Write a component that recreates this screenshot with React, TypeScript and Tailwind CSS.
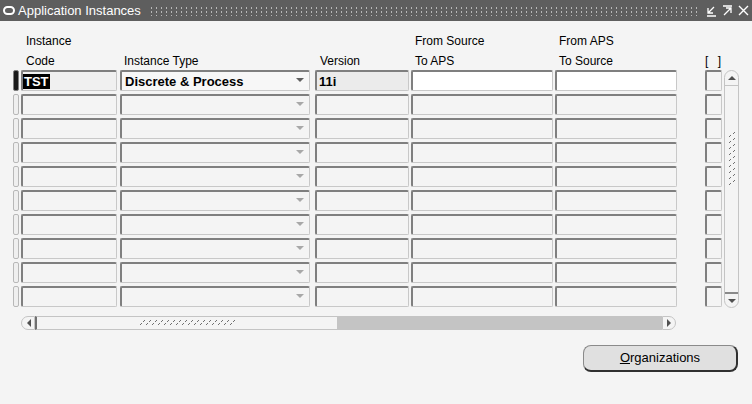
import React from "react";

const FONT = { fontFamily: '"Liberation Sans", Arial, sans-serif' };

const ROWS = 10;

function Cell({ w, bg = "bg-[#f4f4f4]", children, combo = false, active = false }: { w: string; bg?: string; children?: React.ReactNode; combo?: boolean; active?: boolean }) {
  return (
    <div
      className={`relative ${w} h-[21px] ${bg} rounded-[2px] border-t-2 border-l-2 border-r border-b border-t-[#7f7f7f] border-l-[#7f7f7f] border-r-[#c8c8c8] border-b-[#c8c8c8] flex items-center pl-[1px] text-[13px] font-bold text-black leading-none`}
    >
      {children}
      {combo && (
        <span className={`absolute right-[5px] top-[6px] w-0 h-0 border-l-[4px] border-r-[4px] border-t-[4px] border-l-transparent border-r-transparent ${active ? "border-t-[#606060]" : "border-t-[#a8a8a8]"}`} />
      )}
    </div>
  );
}

function Row({ i }: { i: number }) {
  const first = i === 0;
  return (
    <div className="flex items-start h-[24px]">
      <div className="w-[13px]" />
      <div className={`w-[6px] h-[21px] rounded-[2px] ${first ? "bg-[#1a1a1a] border border-[#7f7f7f]" : "border border-[#b8b8b8] bg-[#efefef]"}`} />
      <div className="w-[2px]" />
      <Cell w="w-[96px]" bg={first ? "bg-[#f0f0f0]" : "bg-[#f4f4f4]"}>
        {first && <span className="bg-black text-white px-[1px] py-[1px] -ml-[1px]">TST</span>}
      </Cell>
      <div className="w-[3px]" />
      <Cell w="w-[190px]" bg={first ? "bg-[#f7f7f7]" : "bg-[#f4f4f4]"} combo active={first}>
        {first && <span className="pl-[2px]">Discrete &amp; Process</span>}
      </Cell>
      <div className="w-[5px]" />
      <Cell w="w-[94px]" bg={first ? "bg-[#ebebeb]" : "bg-[#f4f4f4]"}>
        {first && <span className="pl-[1px]">11i</span>}
      </Cell>
      <div className="w-[2px]" />
      <Cell w="w-[142px]" bg={first ? "bg-white" : "bg-[#f4f4f4]"} />
      <div className="w-[2px]" />
      <Cell w="w-[122px]" bg={first ? "bg-white" : "bg-[#f4f4f4]"} />
      <div className="w-[28px]" />
      <div className="w-[17px] h-[21px] rounded-[2px] border-t-2 border-l-2 border-r border-b border-t-[#7f7f7f] border-l-[#7f7f7f] border-r-[#c8c8c8] border-b-[#c8c8c8] bg-[#f4f4f4]" />
    </div>
  );
}

function Grip({ n, vertical = false }: { n: number; vertical?: boolean }) {
  return (
    <svg width={vertical ? 8 : n * 6} height={vertical ? n * 6 : 6}>
      {Array.from({ length: n }).map((_, k) =>
        vertical ? (
          <g key={k}>
            <rect x={1} y={k * 6 + 4} width={1} height={1} fill="#707070" />
            <rect x={2} y={k * 6 + 3} width={1} height={1} fill="#707070" />
            <rect x={5} y={k * 6 + 1} width={1} height={1} fill="#707070" />
            <rect x={6} y={k * 6} width={1} height={1} fill="#707070" />
          </g>
        ) : (
          <g key={k}>
            <rect x={k * 6 + 1} y={4} width={1} height={1} fill="#707070" />
            <rect x={k * 6 + 2} y={3} width={1} height={1} fill="#707070" />
            <rect x={k * 6 + 4} y={1} width={1} height={1} fill="#707070" />
            <rect x={k * 6 + 5} y={0} width={1} height={1} fill="#707070" />
          </g>
        )
      )}
    </svg>
  );
}

export default function App() {
  return (
    <div className="w-[752px] h-[404px] bg-[#f4f4f4] overflow-hidden" style={FONT}>
      {/* title bar */}
      <div className="h-[21px] bg-[#5e5e5e] flex items-center text-white">
        <div className="ml-[3px] w-[12px] h-[9px] rounded-full border-2 border-white" />
        <span className="ml-[3px] text-[13px] leading-none">Application Instances</span>
        <div className="flex-1 mx-[8px] h-[10px] bg-[radial-gradient(#b8b8b8_0.7px,transparent_0.9px)] bg-[length:5px_4px]" />
        <div className="flex items-center gap-[3px] mr-[2px]">
          <svg width="13" height="13" viewBox="0 0 13 13">
            <path d="M9 3 L3 9 M3 4 V9 H8 M2 12 H11" stroke="white" strokeWidth="1.3" fill="none" />
          </svg>
          <svg width="13" height="13" viewBox="0 0 13 13">
            <path d="M2 2 H11 M3 11 L10 4 M5 4 H10 V9" stroke="white" strokeWidth="1.3" fill="none" />
          </svg>
          <svg width="13" height="13" viewBox="0 0 13 13">
            <path d="M2 2 L11 11 M11 2 L2 11" stroke="white" strokeWidth="1.4" fill="none" />
          </svg>
        </div>
      </div>

      {/* column headings */}
      <div className="h-[49px] text-[12px] text-black leading-[20px]">
        <div className="flex pt-[10px]">
          <div className="w-[26px]" />
          <div className="w-[389px]">Instance</div>
          <div className="w-[144px]">From Source</div>
          <div>From APS</div>
        </div>
        <div className="flex">
          <div className="w-[26px]" />
          <div className="w-[98px]">Code</div>
          <div className="w-[196px]">Instance Type</div>
          <div className="w-[95px]">Version</div>
          <div className="w-[144px]">To APS</div>
          <div className="w-[146px]">To Source</div>
          <div className="tracking-[3px]">[ ]</div>
        </div>
      </div>

      {/* rows + vertical scrollbar */}
      <div className="flex">
        <div className="flex flex-col">
          {Array.from({ length: ROWS }).map((_, i) => (
            <Row key={i} i={i} />
          ))}
        </div>
        <div className="ml-[2px] w-[15px] h-[238px] rounded-full border border-[#c4c4c4] bg-[#f4f4f4] flex flex-col items-center justify-between">
          <div className="w-full h-[15px] border-b border-[#c4c4c4] flex items-center justify-center rounded-t-full">
            <span className="w-0 h-0 border-l-[4px] border-r-[4px] border-b-[4px] border-l-transparent border-r-transparent border-b-[#505050]" />
          </div>
          <div className="mt-[46px]">
            <Grip n={9} vertical />
          </div>
          <div className="flex-1" />
          <div className="w-full h-[15px] border-t-2 border-[#8a8a8a] flex items-center justify-center rounded-b-full">
            <span className="w-0 h-0 border-l-[4px] border-r-[4px] border-t-[4px] border-l-transparent border-r-transparent border-t-[#505050]" />
          </div>
        </div>
      </div>

      {/* horizontal scrollbar */}
      <div className="flex mt-[6px] ml-[21px] w-[655px] h-[14px]">
        <div className="w-[14px] h-[14px] bg-[#f4f4f4] border border-[#c4c4c4] rounded-l-full flex items-center justify-center">
          <span className="w-0 h-0 border-t-[4px] border-b-[4px] border-r-[4px] border-t-transparent border-b-transparent border-r-[#505050] ml-[2px]" />
        </div>
        <div className="w-[303px] h-[14px] bg-[#f4f4f4] border-t border-b border-l-2 border-r border-[#c4c4c4] border-l-[#707070] flex items-center justify-center">
          <Grip n={16} />
        </div>
        <div className="flex-1 bg-[#c4c4c4]" />
        <div className="w-[14px] h-[14px] bg-[#f4f4f4] border border-[#c4c4c4] rounded-r-full flex items-center justify-center">
          <span className="w-0 h-0 border-t-[4px] border-b-[4px] border-l-[4px] border-t-transparent border-b-transparent border-l-[#505050] mr-[1px]" />
        </div>
      </div>

      {/* button */}
      <div className="flex justify-end pr-[14px] mt-[15px]">
        <button className="w-[155px] h-[27px] rounded-[8px] bg-[#e0e0e0] border border-[#8a8a8a] border-r-2 border-b-2 border-r-[#303030] border-b-[#303030] text-[13px] text-black" style={FONT}>
          <span className="underline underline-offset-1">O</span>rganizations
        </button>
      </div>
    </div>
  );
}
